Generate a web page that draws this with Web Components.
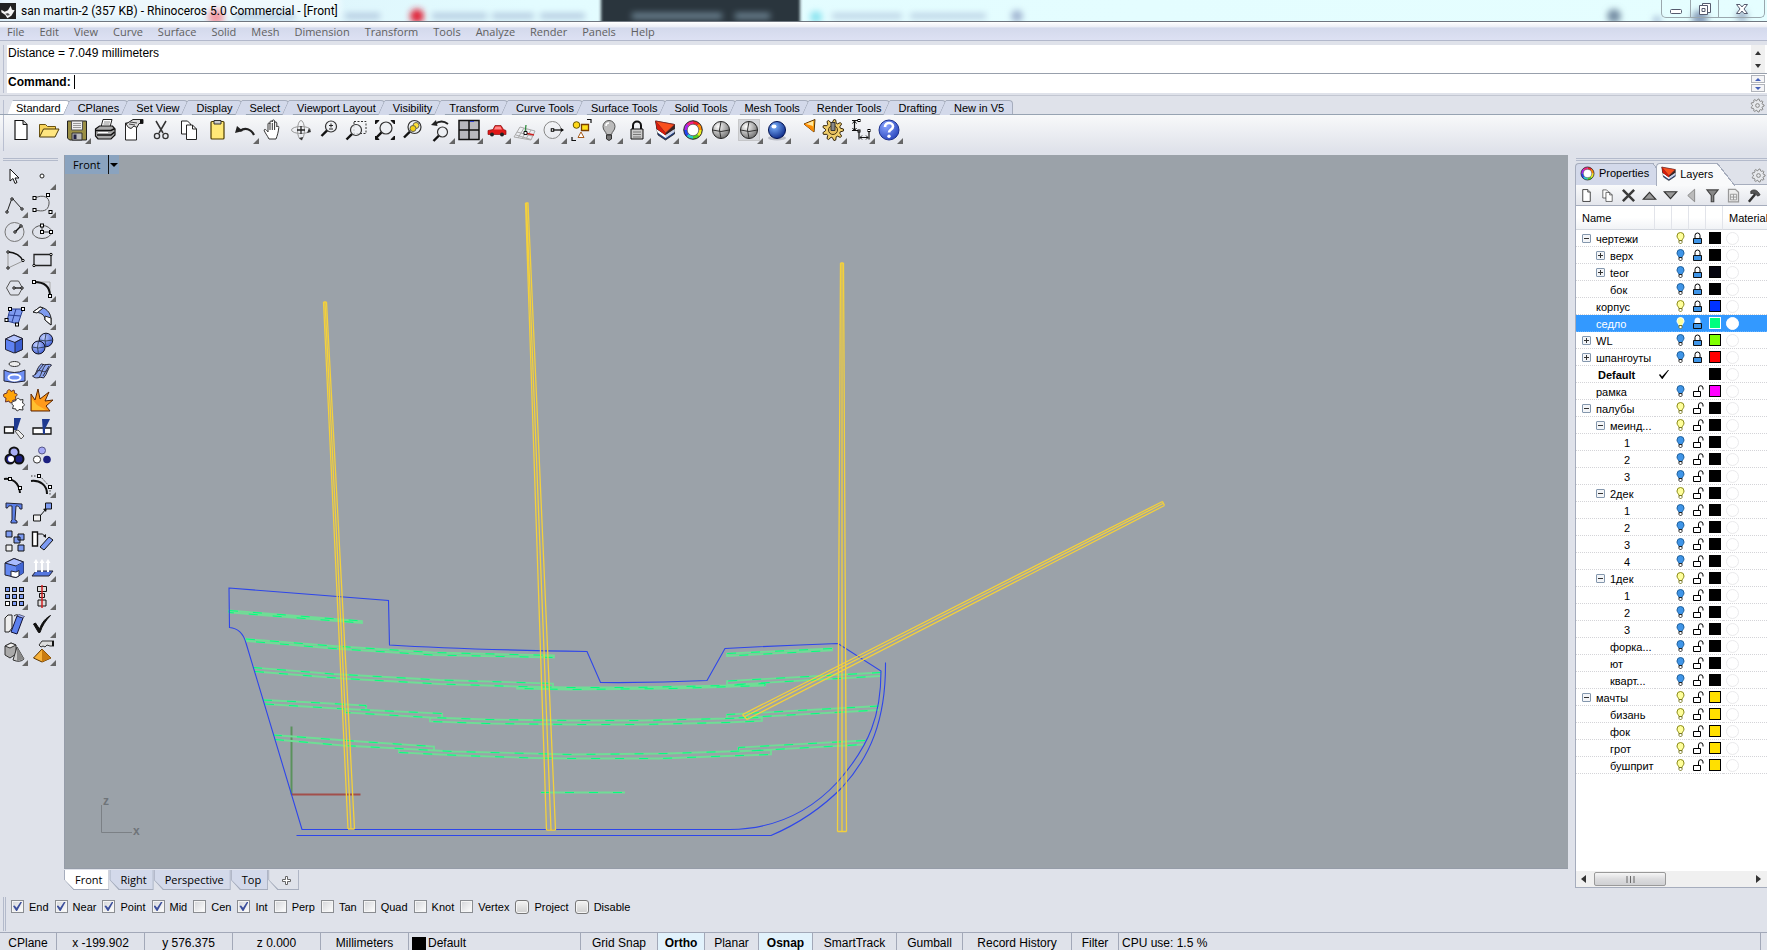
<!DOCTYPE html>
<html lang="en">
<head>
<meta charset="utf-8">
<title>san martin-2 (357 KB) - Rhinoceros 5.0 Commercial - [Front]</title>
<style>
html,body{margin:0;height:100%}
body{font:11px/14px "Liberation Sans",Arial,sans-serif;color:#000;background:#dfe2ea;overflow:hidden;
--face:#dfe2ea;--line:#a6adbd;--tab:#d3d9ea}
</style>
</head>
<body>
<rh-app></rh-app>
<script>
const SEGOE = '"Open Sans","Noto Sans",sans-serif';
const BASE = '*{box-sizing:border-box}button{font:inherit;color:inherit;background:none;border:0;padding:0;margin:0}svg{display:block}';

function define(name, css, html, ready) {
  const t = document.createElement('template');
  t.innerHTML = `<style>${BASE}${css}</style>${html}`;
  customElements.define(name, class extends HTMLElement {
    connectedCallback() {
      if (this.shadowRoot) return;
      const root = this.attachShadow({mode: 'open'});
      root.append(t.content.cloneNode(true));
      if (ready) ready.call(this, root);
    }
  });
}

/* ---------- icons, drawn on a 24 x 24 board ---------- */
const node = (x, y, s = 3) => `<rect x="${x - s / 2}" y="${y - s / 2}" width="${s}" height="${s}" fill="#fff" stroke="#000"/>`;
const dot = (x, y) => `<circle cx="${x}" cy="${y}" r="1.2" fill="#fff" stroke="#000"/>`;
const lens = (x, y, r) => `<path d="M${x - r * .7} ${y + r * .7}L${x - r - 4} ${y + r + 4}" stroke="#111" stroke-width="2.4"/><circle cx="${x}" cy="${y}" r="${r}" fill="#eef0f4" fill-opacity=".8" stroke="#333" stroke-width="1.2"/>`;
const grad = (id, a, b) => `<defs><radialGradient id="${id}" cx=".35" cy=".3" r=".8"><stop offset="0" stop-color="${a}"/><stop offset="1" stop-color="${b}"/></radialGradient></defs>`;
const wheel = (cx, cy, r, w) => ['#e22','#f80','#ee2','#5c2','#2cc','#24e','#a2e','#e28'].map((c, i) => {
  const a = i * Math.PI / 4 - Math.PI / 2, b = a + Math.PI / 4 + .04;
  return `<path d="M${cx + r * Math.cos(a)} ${cy + r * Math.sin(a)}A${r} ${r} 0 0 1 ${cx + r * Math.cos(b)} ${cy + r * Math.sin(b)}" stroke="${c}" stroke-width="${w}"/>`;
}).join('') + `<circle cx="${cx}" cy="${cy}" r="${r + w / 2}" stroke="#222"/><circle cx="${cx}" cy="${cy}" r="${r - w / 2}" fill="#fff" stroke="#444" stroke-width=".7"/>`;
const layersArt = '<path d="M2.500 3L5 17l7.500 5 9-6V6.500z" fill="#26407f" stroke="#222" stroke-width=".8"/><path d="M3.500 11l9 6 9-6v2.500l-9 6.500-8-5.500z" fill="#fff"/><path d="M12.500 17l9-6v3l-9 6z" fill="#c9d3ea"/><path d="M2.500 3l10 12 9-8.500v4.500l-9 6-9-6z" fill="#3a2420"/><path d="M2.500 3l19 3.500-9 8.500z" fill="#f9501e" stroke="#822" stroke-width=".7"/><path d="M2.500 3l10 12v2.500L4 11z" fill="#d81c0c"/>';
const gearPath = (cx, cy, R, r, n) => {
  let d = '';
  for (let i = 0; i < n * 4; i++) {
    const a = (i - .5) * Math.PI * 2 / (n * 4), q = (i % 4 < 2) ? R : r;
    d += (i ? 'L' : 'M') + (cx + q * Math.cos(a)).toFixed(1) + ' ' + (cy + q * Math.sin(a)).toFixed(1);
  }
  return d + 'z';
};
const sphere = (a, b, id) => grad(id, a, b) + `<circle cx="12" cy="12" r="8.500" fill="url(#${id})" stroke="#222"/><path d="M3.500 12q8.500 3 17 0M12 3.500q-3 8.500 0 17" stroke="#333"/>`;

const ICONS = {
  new: '<path d="M6 2.500h8l4 4v15H6z" fill="#fff" stroke="#111" stroke-width="1.200"/><path d="M14 2.500v4h4" fill="#ccc" stroke="#111"/>',
  open: '<path d="M2.500 19V6.500h6l2 2h8v3" fill="#f7d35a" stroke="#6b5310"/><path d="M2.500 19l4-8h15.500l-4 8z" fill="#ffe680" stroke="#4c3b08"/>',
  save: '<path d="M2.500 3h19v19h-17l-2-2z" fill="#9a8f45" stroke="#222"/><path d="M6.500 3h11v9h-11z" fill="#eee" stroke="#555"/><path d="M8 5.500h8M8 7.500h8M8 9.500h8" stroke="#999"/><path d="M7 15h10v7H7z" fill="#bbb" stroke="#333"/><path d="M8.500 16.500h3v4.500h-3z" fill="#224"/>',
  print: '<path d="M8 9l2-7.500h9L17 9z" fill="#fff" stroke="#222"/><path d="M11 4h6M10.500 6h6" stroke="#888"/><path d="M2.500 11l4-3h13l2.500 3v6l-4 4h-13l-2.500-3z" fill="#aaa" stroke="#111" stroke-width="1.200"/><path d="M2.500 12.500h15.500l4-2M4 17h14l3.500-3" stroke="#111" stroke-width="1.600"/><path d="M5 14.500h10" stroke="#fff"/>',
  props: '<path d="M4.500 5h11v17h-11z" fill="#fff" stroke="#222"/><path d="M5 6L12 1.500h10v4h-4l-2 4-3-1.500-3 2.500-2.500-1z" fill="#ddd" stroke="#222"/><path d="M8 6l6 1M9 4l7 1" stroke="#444"/><path d="M19 2h3v3h-3z" fill="#111"/>',
  cut: '<path d="M7 3l7 12M17 3l-7 12" stroke="#333" stroke-width="1.500"/><circle cx="8" cy="18" r="2.600" stroke="#333" stroke-width="1.300"/><circle cx="16.500" cy="18" r="2.600" stroke="#333" stroke-width="1.300"/>',
  copy: '<path d="M4.500 3h6l3 3v10h-9z" fill="#fff" stroke="#222"/><path d="M9.500 7h6l4 4v10.500h-10z" fill="#fff" stroke="#222"/><path d="M15.500 7v4h4" stroke="#222"/>',
  paste: '<rect x="6" y="3.500" width="13" height="17.500" rx="1" fill="#ffe877" stroke="#4b3b00" stroke-width="1.200"/><path d="M9 2.500h7v3.500H9z" fill="#ccc" stroke="#333"/>',
  undo: '<path d="M21 17c-3-6-9-8-14-4" stroke="#222" stroke-width="2.200"/><path d="M2 15l2-7 6 5z" fill="#222"/>',
  hand: '<path d="M8 21c-2-4-4-6-5-9 1-1.500 2.500 0 4 2V6c0-1.500 2-1.500 2 0v-2c0-1.500 2.300-1.500 2.300 0V3c0-1.500 2.300-1.300 2.300 0v2c0-1.500 2.200-1.300 2.200 0v4c.5-1.500 2.300-1 2 .5-.5 5-1.500 8-2.800 11.500z" fill="#fff" stroke="#333"/><path d="M9 6v6M11.300 5v7M13.600 5v7" stroke="#333"/>',
  rotate: '<ellipse cx="12" cy="12" rx="9.500" ry="3.500" stroke="#999"/><ellipse cx="12" cy="12" rx="3.500" ry="9.500" stroke="#999"/><path d="M12 8v8M8 12h8" stroke="#222" stroke-width="1.300"/><path d="M20 10l2 4-4 1zM10 20l3 2.500 1-3.500z" fill="#333"/>',
  zoom1: lens(14, 8.5, 5.5) + '<path d="M14 5.500v4M12 7.500h4M12 11h4" stroke="#222"/>',
  zoomwin: '<path d="M9 3.500h12v12H9z" stroke="#333" stroke-dasharray="2 1.500"/>' + lens(11, 12, 5.5),
  zoomext: '<path d="M2.500 6V2.500H6zM18 2.500h3.500V6zM2.500 18v3.500H6zM21.500 18v3.500H18z" fill="#111" stroke="#111"/>' + lens(13, 10, 6),
  zoomsel: lens(13.5, 9, 6.5) + '<circle cx="15" cy="7.500" r="3" fill="#ffe23a" stroke="#665"/><circle cx="12" cy="10.500" r="3" fill="#f4d010" stroke="#665"/>',
  zoomundo: lens(13.5, 14, 5) + '<path d="M19 6c-4-3-9-3-13 0" stroke="#222" stroke-width="2"/><path d="M2 7l5-5 1.500 6z" fill="#222"/>',
  fourview: '<path d="M2 2.500h20v19H2z" fill="#b8b8bd" stroke="#111" stroke-width="1.500"/><path d="M12 2.500v19M2 12h20" stroke="#111" stroke-width="1.500"/><path d="M13 3.500h4" stroke="#34c"/>',
  car: '<path d="M3 12.500l5-1 2-4h6l2.500 4 2.500 1v4H3z" fill="#e01818" stroke="#811" stroke-width=".7"/><path d="M10.500 8.500h5l1.500 3H9z" fill="#f88"/><circle cx="7" cy="16.500" r="2" fill="#222"/><circle cx="17" cy="16.500" r="2" fill="#222"/>',
  cplane: '<path d="M1 19L7 9l15 4-4 9zM4 14l15 4M9 21l5-10M3 17l15 4.500M13 21l5-9M5 20l6-10" stroke="#aaa"/><path d="M12 15l1-8" stroke="#2a8a3a" stroke-width="1.300"/><path d="M12 15l9 2" stroke="#c22" stroke-width="1.600"/><path d="M11 13.500h3v3h-3z" fill="#fff" stroke="#111"/>',
  circ: '<circle cx="11.500" cy="12" r="8.500" stroke="#888"/><path d="M11 12h11" stroke="#111" stroke-width="1.300"/><path d="M20 10l3 2-3 2z" fill="#111"/>' + node(11.5, 12, 2.5),
  select: '<path d="M3 19v3.500h4M18 1.500h4V5" stroke="#111" stroke-width="1.200"/><circle cx="7.500" cy="7" r="3.300" fill="#ffd91a" stroke="#665500"/><path d="M12.500 6.500h7v6h-7z" fill="#ffe11a" stroke="#7a3f00" stroke-width="1.300"/><path d="M9 19.500l3-5.500 3 5.500z" fill="#fff" stroke="#a65a1a"/>',
  bulb: '<path d="M12 2.500a6 6 0 0 1 6 6c0 4-3 5-3.500 8h-5C9 13.500 6 12.500 6 8.500a6 6 0 0 1 6-6z" fill="#bbb" stroke="#555"/><path d="M9 8c0-2 1-3 3-3" stroke="#fff" stroke-width="1.500"/><path d="M9.500 17h5v4l-2.500 1.500-2.500-1.500z" fill="#777" stroke="#333"/>',
  lock: '<path d="M8 11V7.500a4 4 0 0 1 8 0V11" stroke="#111" stroke-width="2"/><path d="M6 11h12v10H6z" fill="#ccc" stroke="#111"/><path d="M8 14h8M8 16.500h8M8 19h8" stroke="#777"/>',
  layers: layersArt,
  wheel: wheel(12, 12, 7.5, 3.5),
  sphere1: sphere('#fff', '#666', 's1'),
  sphere2: '<path d="M1.500 1.500h21v21h-21z" fill="#d4d6da" stroke="#aaa" stroke-dasharray="1 1"/>' + sphere('#fff', '#666', 's2'),
  render: grad('s3', '#7db4ff', '#05207f') + '<ellipse cx="12" cy="20" rx="9" ry="2.500" fill="#b9bcc5"/><circle cx="12" cy="12" r="8.500" fill="url(#s3)" stroke="#021250"/><ellipse cx="9" cy="8.500" rx="2.500" ry="2" fill="#fff"/>',
  spot: '<path d="M11 6L22 1.500 21 14z" fill="#ffb020" stroke="#5a3300"/><path d="M11 6l7-2 3 10z" fill="#ff8a00"/><path d="M13 6l7-3 0 5z" fill="#ffe9a0"/>',
  options: `<path d="${gearPath(12, 12, 10.5, 7.5, 9)}" fill="#f0ce6a" stroke="#33240a"/><circle cx="12" cy="12" r="4.500" fill="#e6bf60" stroke="#4a3510"/><path d="M10 4.500h4v8h-4z" fill="#888" stroke="#333"/>`,
  dims: '<path d="M3 2.500h8M3 12.500h8M5.500 3v9M10 12.500v9M20 12.500v9M11 19.500h8" stroke="#111" stroke-width="1.200"/><path d="M3.500 5.500l2-2.500 2 2.500M3.500 10l2 2.500 2-2.500M13 17.500l-2 2 2 2M17 17.500l2 2-2 2" stroke="#111"/>' + node(10, 2.5, 2) + node(20, 12.5, 2) + node(10, 13, 2),
  help: grad('s4', '#8aa5ff', '#2340b8') + '<circle cx="12" cy="12" r="10" fill="url(#s4)" stroke="#1d328f"/><path d="M8 9c0-5.500 8-5 8-.5 0 3-4 3-4 6" stroke="#fff" stroke-width="2.600"/><circle cx="12" cy="18.200" r="1.700" fill="#fff"/>',

  arrow: '<path d="M8 5v12l3-2.500 2 5 2-1-2-4.500h4z" fill="#fff" stroke="#111"/>',
  point: '<circle cx="12" cy="12" r="2" fill="#fff" stroke="#222"/>',
  polyline: '<path d="M5 20L10 6l10 11" stroke="#222"/>' + dot(5, 20) + dot(10, 7) + dot(20, 17),
  curve: '<path d="M5 6c8-4 15-1 14 6s-6 8-14 6" stroke="#555"/>' + node(4.500, 6) + node(18, 3) + node(4.500, 18) + node(20.500, 20),
  circle: '<circle cx="12.500" cy="12" r="9.500" stroke="#777"/><path d="M13 12l6-6" stroke="#111" stroke-width="1.400"/>' + dot(13, 12) + dot(19, 6),
  ellipse: '<ellipse cx="12" cy="12" rx="9.500" ry="6.500" stroke="#555"/><path d="M12 12V5.500M12 12h9" stroke="#333"/>' + node(12, 12) + node(12, 5.5) + node(21, 12),
  arc: '<path d="M6 20V4c7 0 13 4 15 9z" stroke="#999"/><path d="M6 4c7 0 13 4 15 9" stroke="#111" stroke-width="1.400"/>' + dot(6, 20) + dot(6, 4) + dot(21, 12.5),
  rect: '<path d="M4 6.500h17v11H4z" stroke="#222" stroke-width="1.300"/>' + dot(4, 17.5) + dot(21, 6.5),
  polygon: '<path d="M4.500 12l4-7h8l4 7-4 7h-8z" stroke="#555"/><path d="M12 12h8" stroke="#111" stroke-width="1.300"/>' + dot(12, 12) + dot(20, 12),
  fillet: '<path d="M4 6h16v14" stroke="#aaa"/><path d="M4 6c10 0 16 4 16 14" stroke="#111" stroke-width="2"/>' + node(4, 6) + node(20, 20),
  surface: '<path d="M8 5h13l-5 15-11-3z" fill="#7e9bf0" stroke="#2a3f90"/><path d="M14 5l-4 13M6 11l13 1" stroke="#2a3f90"/>' + node(8, 5) + node(21, 5) + node(4.500, 16) + node(15, 20.500),
  loft: '<path d="M3 8l7-5c6 1 10 5 11 11v7l-6-5c0-5-4-8-12-8z" fill="#7e9bf0" stroke="#222"/><path d="M3 8l7-5 3 1-6 5zM15 12l6 2v7l-6-5z" fill="#fff" stroke="#222"/>',
  box: '<path d="M3.500 7L12 3l8.500 3.500v11L12 21l-8.500-3.500z" fill="#5f82f2" stroke="#223"/><path d="M3.500 7L12 3l8.500 3.500L13 10.500z" fill="#b5c5ff" stroke="#223"/><path d="M13 10.500l7.500-4v11L13 21z" fill="#3c5fd0" stroke="#223"/>',
  boolean: grad('s5', '#c3d0ff', '#3656d0') + '<circle cx="16" cy="8" r="6.800" fill="url(#s5)" stroke="#112"/><circle cx="8.500" cy="15.500" r="6.500" fill="url(#s5)" stroke="#112"/><path d="M9.500 8q6 2 13 0M16 1.500q-2 6 0 13M2 15q6 2 13 0M8.500 9q-2 6 0 13" stroke="#234" stroke-width=".8"/>',
  tube: '<ellipse cx="12.500" cy="4" rx="5.500" ry="2.500" fill="#eee" stroke="#333"/><path d="M2 10q10 5 21 0v11q-11 3-21 0z" fill="#6f90f5" stroke="#223"/><ellipse cx="12.500" cy="17.500" rx="6" ry="3" fill="#6f90f5" stroke="#fff" stroke-width="2"/>',
  mesh: '<path d="M2.500 16c4 0 4-9 9-12 4 2 7-1 10 1-4 3-4 9-8 13-4-2-7 2-11-2z" fill="#8ea8f2" stroke="#223"/><path d="M7 11c4-2 6 3 11-1M9 18c3-5 3-9 7-14M5 15l8-10M13 16L19 6" stroke="#334"/>',
  puzzle: '<path d="M2 6l3-1c-.5-3.500 3.500-4.500 4-1.500l3-1.500.8 3.500c3-.5 3 2.500.6 3l.6 3-3.500 1c0 3-3.500 3-3.500.5L3.500 14l.5-4C1.500 10 1 7 2 6z" fill="#ffa40a" stroke="#633"/><path d="M11 13.500l3-1c0-2.500 3.500-3 4-.5l3-.5-.5 3.500c2.500.5 2.500 3 0 3.500l.5 3.500-4-.5c-.5 2-3.500 1.500-3-.5l-3.500-.5 1-3c-2-.5-2-3-.5-4z" fill="#fff" stroke="#333"/>',
  explode: '<path d="M1 23V6l4 6 3-11 2 10 9-7-4 9 8-1-7 6 4 5z" fill="#ff9a1a" stroke="#5a2500"/><path d="M2 22V11l5 6 9 5z" fill="#ffc030"/>',
  trim: '<path d="M2.500 11h9v6h-9z" fill="#fff" stroke="#111" stroke-width="1.300"/><path d="M12 2h7l-4 12h-3z" fill="#1e3a90"/><path d="M13 15l3-1 6 6-3 3z" fill="#eee" stroke="#555"/>',
  split: '<path d="M3 12h18v6H3z" fill="#fff" stroke="#111" stroke-width="1.300"/><path d="M12 3h8l-5 10v5h-2z" fill="#1e3a90"/>',
  join: '<circle cx="12" cy="8" r="4.500" fill="#a9aef5" stroke="#111" stroke-width="2"/><circle cx="17" cy="15" r="4.500" fill="#1b1f80" stroke="#111" stroke-width="2"/><circle cx="8" cy="15" r="4.500" fill="#22259a" stroke="#111" stroke-width="2"/><circle cx="12.500" cy="8.500" r="3" fill="#a9aef5"/><circle cx="9" cy="15" r="3" fill="#fff"/>',
  group: '<circle cx="12" cy="6.500" r="3.500" fill="#a5a9f5" stroke="#558"/><circle cx="7" cy="15.500" r="3.600" fill="#fff" stroke="#333"/><circle cx="17" cy="15.500" r="3.800" fill="#1b1f80"/>',
  cvedit: '<path d="M2 7c8-1 15 3 16 14" stroke="#111" stroke-width="2"/>' + node(8, 7) + node(18, 16),
  ptson: '<path d="M1 9c9-1 16 4 16 13" stroke="#111" stroke-width="2"/><path d="M1 4h9l10 11v8" stroke="#333" stroke-dasharray="1.500 1.500"/>' + node(9, 4) + node(20, 15),
  text: '<path d="M4 3l16 1v5h-2c-1-3-2-3-4-3l-1 14 2 1v2H9v-2l1-1L10 6C7 5.500 6 6 5.500 8H4z" fill="#5c80e8" stroke="#223"/>',
  move: '<path d="M10 16l6-7" stroke="#111"/><path d="M17 8l-4 1 3 3z" fill="#111"/><path d="M3.500 15h7v6h-7z" fill="#eee" stroke="#111"/><path d="M15.500 3h6v6h-6z" fill="#7d9bf2" stroke="#111"/>',
  copies: '<path d="M4 3h6v6H4zM16 6h6v6h-6zM12 9h6v6h-6zM16 17h6v6h-6z" fill="#7d9bf2" stroke="#111"/><path d="M4 17h6v6H4z" fill="#eee" stroke="#111"/>',
  orient: '<path d="M2.500 4h5v14h-5z" fill="#fff" stroke="#111" stroke-width="1.400"/><path d="M10 19L19 9l4 3-9 10z" fill="#7d9bf2" stroke="#111"/><path d="M8 6q5-1 7 2" stroke="#111"/><path d="M16 10l-3-2 3-2z" fill="#111"/>',
  cage: '<path d="M3 7l9-4.500L21.500 6v11L14 21.500 3 19z" fill="#6488f0" stroke="#223"/><path d="M3 7l9-4.500L21.500 6 14 10z" fill="#a9bcff" stroke="#223"/><path d="M14 10l7.500-4v11L14 21z" fill="#4266d4"/><path d="M9 15l5 1 3-1.500v5.500l-3 1.500-5-1z" fill="#fff" stroke="#223"/>',
  extrude: '<path d="M2 20l4-5h17l-4 5z" fill="#5577e0" stroke="#223"/><path d="M6 16V6M12 16V6M18 16V6" stroke="#fff" stroke-width="2"/><path d="M3.500 7L6 3l2.500 4zM9.500 7L12 3l2.500 4zM15.500 7L18 3l2.500 4z" fill="#fff"/>',
  array: [3, 10, 17].map(x => [3, 10, 17].map(y => `<rect x="${x + .5}" y="${y + .5}" width="4" height="4" fill="${x === 3 && y === 17 ? '#fff' : '#7d9bf2'}" stroke="#111"/>`).join('')).join(''),
  align: '<path d="M7.500 2.500h9v5h-9zM9.500 9.500h5v4h-5zM8 16h8v6H8z" fill="#ddd" stroke="#111"/><path d="M12 1v23" stroke="#d02020" stroke-width="1.500"/>',
  bend: '<path d="M3 6l3-3h4v13l-3 4H3z" fill="#eee" stroke="#222"/><path d="M12 4q4-3 5 1" stroke="#222"/><path d="M9 20l6-16 6 2-6 16z" fill="#5c80ee" stroke="#113"/><path d="M15 4l2-1.500 5.500 2L21 6z" fill="#b0c0ff" stroke="#113" stroke-width=".6"/>',
  check: '<path d="M3.500 12l2-1 4 6C12 10 16 6 20.500 3.500 16 8 12 14 10 20.500H8.500z" fill="#111" stroke="#111"/>',
  solids: '<path d="M3 6l6-3 5 2v9l-6 4-5-3z" fill="#aaa" stroke="#333"/><path d="M3 6l6-3 5 2-6 3z" fill="#eee" stroke="#333"/><path d="M15 7l7 12q-4 4-11 1z" fill="#ccc" stroke="#333"/><path d="M15 7l0 14 7-2z" fill="#888"/>',
  pyramid: '<path d="M3.500 18L12 9l9 9-9 4z" fill="#f7b23a" stroke="#5a3300"/><path d="M12 9v13l9-4z" fill="#c97c10"/><path d="M9 5l3-4h12v5h-4l-3-1-2 2-2-1-2 1z" fill="#ddd" stroke="#333"/><path d="M22 1h2v5h-2z" fill="#111"/>',
  gear: `<path d="${gearPath(12, 12, 10.5, 8, 9)}" fill="#e6e8ec" stroke="#888" stroke-width="1.600"/><circle cx="12" cy="12" r="3" stroke="#888" stroke-width="1.600"/>`,

  del: '<path d="M3 3l18 18M21 3L3 21" stroke="#3b3b3b" stroke-width="4"/>',
  up: '<path d="M2 18L12 7l10 11z" fill="#999" stroke="#333" stroke-width="1.800"/>',
  down: '<path d="M2 6l10 11L22 6z" fill="#999" stroke="#333" stroke-width="1.800"/>',
  left: '<path d="M17 2v20L6 12z" fill="#bbb" stroke="#888" stroke-width="1.500"/>',
  filter: '<path d="M3 3h18l-7 9v10h-4V12z" fill="#888" stroke="#444" stroke-width="1.800"/>',
  sheet: '<path d="M4 2h11l5 5v15H4z" fill="#eee" stroke="#999" stroke-width="2"/><path d="M7 10h10v9H7zM12 10v9M7 14.500h10" stroke="#999" stroke-width="1.500"/>',
  hammer: '<path d="M13 10L3 22" stroke="#333" stroke-width="4"/><path d="M6 5c5-4 11-2 15 6l-4 2c-3-4-6-5-11-4z" fill="#555" stroke="#222"/>',
  rhino: '<path d="M0 0h24v24H0z" fill="#222"/><path d="M2 10l5 3 5-2 4-7 2 6 4 1-5 8-6 4-3-5-6-4z" fill="#f4f4f4"/><path d="M8 16l4-1 3 3-4 1z" fill="#555"/>'
};
define('rh-icon', ':host{display:block;width:24px;height:24px;flex:none}svg{width:100%;height:100%}', '<svg viewBox="0 0 24 24" fill="none" aria-hidden="true"></svg>', function (root) {
  root.querySelector('svg').innerHTML = ICONS[this.getAttribute('name')] || '';
});
/* A tool button; the "more" attribute adds the fly-out corner. */
define('rh-tool', `:host{display:block;width:28px;height:28px}button{display:grid;place-items:center;width:28px;height:28px;position:relative}
:host([more]) button::after{content:"";position:absolute;right:0;bottom:0;border:3px solid;border-color:transparent #666 #666 transparent}`,
'<button type="button"></button>', function (root) {
  const n = this.getAttribute('name');
  root.querySelector('button').setAttribute('aria-label', n);
  root.querySelector('button').innerHTML = `<rh-icon name="${n}"></rh-icon>`;
});

/* ---------- title bar ---------- */
define('rh-titlebar', `:host{display:flex;height:22px;position:relative;overflow:hidden;background:linear-gradient(90deg,#d9ecf8,#e3fcff 30%,#e5feff);border-bottom:1px solid #6f7680;font:12px/20px Roboto,"Open Sans",sans-serif}
.back{position:absolute;inset:0;width:100%;height:21px}
.name{display:flex;gap:5px;position:relative;align-items:center}rh-icon{width:16px;height:16px}
.win{position:relative;margin-left:auto;margin-right:2px;display:flex;height:18px;border:1px solid #9aa7ad;border-top:0;border-radius:0 0 5px 5px}
button{width:28px;display:grid;place-items:center}button+button{border-left:1px solid #9aa7ad}button:last-child{width:46px}`,
`<svg class="back" preserveAspectRatio="xMinYMin slice" viewBox="0 0 1767 21"><defs><filter id="b" x="-20%" y="-200%" width="140%" height="500%"><feGaussianBlur stdDeviation="3"/></filter><filter id="c" x="-5%" y="-50%" width="110%" height="200%"><feGaussianBlur stdDeviation="1.500"/></filter></defs>
<path d="M0 -6h340v24H0z" fill="#fff" opacity=".5" filter="url(#b)"/>
<path d="M601-6h199v40H601z" fill="#2b353d" filter="url(#c)"/>
<g filter="url(#b)"><circle cx="216" cy="17" r="8" fill="#f29ba5"/><circle cx="417" cy="16" r="7" fill="#e02438"/><path d="M235 13h60v6h-60zM345 13h35v6h-35zM432 13h55v6h-55zM492 13h42v6h-42zM540 13h45v6h-45z" fill="#b4cbe0"/><path d="M632 13h90v6h-90zM735 13h35v6h-35z" fill="#6e8594"/><circle cx="816" cy="17" r="6" fill="#8be4f0"/><path d="M832 13h70v6h-70zM910 13h76v6h-76z" fill="#bdd4e6"/><circle cx="1017" cy="16" r="6" fill="#a2b6d2"/><circle cx="1614" cy="16" r="7" fill="#7890a6"/><circle cx="1657" cy="20" r="4" fill="#a9c0da"/><circle cx="1700" cy="18" r="8" fill="#8aa0bc"/><circle cx="1742" cy="16" r="6" fill="#a4b7cc"/></g></svg>
<div class="name"><rh-icon name="rhino"></rh-icon><span>san martin-2 (357 KB) - Rhinoceros 5.0 Commercial - [Front]</span></div>
<div class="win"><button type="button" aria-label="Minimize"><svg width="14" height="12" fill="#fff" stroke="#555b6e"><rect x="1.500" y="6.500" width="11" height="4" rx="1"/></svg></button><button type="button" aria-label="Restore"><svg width="14" height="14" fill="#fff" stroke="#555b6e"><path d="M4.500 1.500h8v9h-8z"/><path d="M1.500 3.500h8v9h-8z"/><path d="M4 6.500h3v3H4z"/></svg></button><button type="button" aria-label="Close"><svg width="14" height="12" fill="#fff" stroke="#555b6e"><path d="M1.500 1.500h3.500l2 2.500 2-2.500h3.500L9 6l3.500 4.500H9L7 8l-2 2.500H1.500L5 6z"/></svg></button></div>`);

/* ---------- menu bar ---------- */
define('rh-menubar', `:host{display:block;height:23px;border-bottom:4px solid var(--face)}
nav{display:flex;gap:15px;padding:0 7px;height:19px;background:linear-gradient(#fff,#eaecf5 30%,#d3d9ec 31%,#dde1f3);border-bottom:1px solid #b2b8cb;font:11px/19px ${SEGOE};color:#606060}a{color:inherit;text-decoration:none}`,
'<nav></nav>', function (root) {
  root.querySelector('nav').innerHTML = 'File Edit View Curve Surface Solid Mesh Dimension Transform Tools Analyze Render Panels Help'.split(' ').map(m => `<a href="#">${m}</a>`).join('');
});

/* ---------- command history and prompt ---------- */
define('rh-command', `:host{display:block;padding:0 0 2px 3px;border-bottom:1px solid #c3c7d2}
.in{border-left:1px solid #b9bfd0;padding-left:3px;display:block;font-size:12px}
.hist,.cmd{background:#fff;display:flex;justify-content:space-between}
.hist{height:28px;padding-left:1px;line-height:16px}
.cmd{border-top:1px solid #98a0ac;height:20px;padding-left:1px;line-height:16px}
label{font-weight:bold}.left{display:flex;align-items:center;flex:1;gap:3px;height:16px}i{width:1px;height:14px;background:#000}
input{border:0;outline:0;padding:0;flex:1;height:16px;font:inherit;background:none}
.sb,.spin{width:14px;margin-right:2px;display:flex;flex-direction:column;align-items:center}
.sb{background:#f0f0f0;justify-content:space-around}.spin{gap:1px;padding-top:1px}
.spin button{width:14px;height:8px;border:1px solid #b0b3ba;background:#f4f4f6;display:grid;place-items:center}`,
`<div class="in"><div class="hist"><span>Distance = 7.049 millimeters</span><div class="sb"><svg width="8" height="5"><path d="M1 5l3-4 3 4z" fill="#333"/></svg><svg width="8" height="5"><path d="M1 0l3 4 3-4z" fill="#333"/></svg></div></div>
<div class="cmd"><div class="left"><label for="c">Command:</label><i></i><input id="c" type="text"></div><div class="spin"><button type="button" aria-label="Up"><svg width="6" height="3"><path d="M0 3l3-3 3 3z" fill="#4560b8"/></svg></button><button type="button" aria-label="Down"><svg width="6" height="3"><path d="M0 0l3 3 3-3z" fill="#4560b8"/></svg></button></div></div></div>`);

/* ---------- toolbar tabs ---------- */
define('rh-tooltabs', `:host{display:flex;align-items:flex-end;height:19px;padding:0 2px 0 3px;border-bottom:1px solid #97a3b2}
.tabs{display:flex;padding-left:4px;height:14px;border-left:1px solid #b9bfd0}
button{position:relative;height:14px;line-height:15px;padding:0 8px;background:var(--tab);border:1px solid var(--line);border-width:1px 1px 0 0;border-radius:0 4px 0 0;white-space:nowrap;z-index:0}
button::before{content:"";position:absolute;z-index:-1;left:-4px;top:-1px;width:10px;height:14px;background:var(--tab);border:1px solid var(--line);border-width:1px 0 0 1px;border-radius:2px 0 0 0;transform:skewX(-24deg)}
button:first-child::before{left:0}button:first-child{clip-path:polygon(0 100%,5px 0,100% 0,100% 100%)}
button[aria-selected=true],button[aria-selected=true]::before{background:#fff}
rh-icon{width:15px;height:15px;margin:0 0 1px auto}`,
'<div class="tabs" role="tablist"></div><rh-icon name="gear"></rh-icon>', function (root) {
  root.querySelector('.tabs').innerHTML = ['Standard', 'CPlanes', 'Set View', 'Display', 'Select', 'Viewport Layout', 'Visibility', 'Transform', 'Curve Tools', 'Surface Tools', 'Solid Tools', 'Mesh Tools', 'Render Tools', 'Drafting', 'New in V5']
    .map((t, i) => `<button type="button" role="tab" aria-selected="${!i}">${t}</button>`).join('');
});
define('rh-toolbar', ':host{display:block;height:40px;padding-left:3px;background:linear-gradient(#f8f9fa,#dfe2ea 90%)}div{display:flex;padding:1px 3px 0;height:36px;border-left:1px solid #b9bfd0}', '<div></div>', function (root) {
  const plain = 'new open print props cut copy paste hand rotate zoom1 zoomwin zoomext zoomsel sphere1'.split(' ');
  root.querySelector('div').innerHTML = 'new open save print props cut copy paste undo hand rotate zoom1 zoomwin zoomext zoomsel zoomundo fourview car cplane circ select bulb lock layers wheel sphere1 sphere2 render spot options dims help'.split(' ')
    .map(n => `<rh-tool name="${n}"${plain.includes(n) ? '' : ' more'}></rh-tool>`).join('');
});

/* ---------- side tool palette ---------- */
define('rh-sidebar', `:host{display:block;width:64px;flex:none;padding-top:3px}
.grip{height:3px;border:solid #b3bacb;border-width:1px 0;margin:0 6px 1px 3px}.g{display:grid;grid-template-columns:28px 28px}`,
'<div class="grip"></div><div class="g"></div>', function (root) {
  const plain = 'arrow puzzle explode trim split group cvedit copies orient'.split(' ');
  root.querySelector('.g').innerHTML = 'arrow point polyline curve circle ellipse arc rect polygon fillet surface loft box boolean tube mesh puzzle explode trim split join group cvedit ptson text move copies orient cage extrude array align bend check solids pyramid'.split(' ')
    .map(n => `<rh-tool name="${n}"${plain.includes(n) ? '' : ' more'}></rh-tool>`).join('');
});

/* ---------- viewport with the ship drawing ---------- */
const green = [
  'M229 610.500L362 621v2L229 612.500z', 'M246 639L333 646 433 652.500 554 655.500v2L433 655 333 648.500 246 641z',
  'M253 667.500L333 674 440 680 553 683.500v4', 'M255 671.500L343 678.500 440 684 517 686.500 570 687.500 634 687.500 727 685.500 765 683.500v2L673 688.500 570 689.500 517 688.500v-2',
  'M881 672.500L727 681v4L881 676', 'M263 700L313 702.500 366 705.500v4', 'M265 704L345 709 442 713.500v4', 'M345 709v3.500L430 717.500 487 719.500 570 720.500 643 720.500 727 718.500 762 717.500v3.500L727 722.500 643 724.500 570 724.500 487 723.500 430 721.500v-4',
  'M879 706L727 714.500v4L879 710', 'M273 735L360 741.500 434 746.500v4', 'M275 739.500L343 745.500 399 748.500 453 751.500 570 754.500 667 753.500 727 751.500 771 750v4.500L727 756 660 758.500 570 758.500 533 758 460 755.500 399 752.500v-4',
  'M865 740.500L738.500 747.500v4L864 744.500', 'M832 648.500L727 653.500v2.500L832 650.500z', 'M541 792.500H625'
].join('');
const hull = 'M229 588L388.500 600.500 389.500 645Q460 649.500 587 651.500L600.500 682.500Q655 683 707 680.500L725 648.500Q780 645.500 838 643.500L881 671C881 715 870 745 838 781.500 810 812 775 829 730 829.500H302L246 643Q242 628.500 229.500 627.500z';
const keel = 'M885.500 662.500C886 720 870 757 842 787.500Q812 818 771 835.500H296.500';
const masts = 'M323.500 302L348 829M325 302L351 829M326.500 302L354.500 829M323.500 302h3M348 829h6.500M525.500 203L546.500 830M526.500 203L551 830M528 203L555.500 830M525.500 203h3M546.500 830h9M840.500 263L837.500 831.500M842 263V831.500M843.500 263L846.500 831.500M840.500 263h3M837.500 831.500h9M742.500 714.500L1162.500 501.500M744 717L1163 503.500M747 719.500L1164.500 505.500M742.500 714.500l4.500 5M1162.500 501.500l2 4';
define('rh-viewport', `:host{display:block;flex:1;min-height:0;position:relative;background:#9ba2a9;border:1px solid #959ca8;border-width:0 0 1px 1px;overflow:hidden}
svg.draw{width:100%;height:100%}.cap{position:absolute;left:0;top:0;display:flex;height:19px;background:#8aa3bf;font:11px/19px ${SEGOE};padding-left:8px}
button{width:11px;margin-left:8px;border-left:1px solid #111;display:grid;place-items:center}text{font:bold 12px "Liberation Sans",sans-serif;fill:#6f7479}`,
`<svg class="draw" viewBox="65 155 1503 713" fill="none" stroke-width="1"><g stroke-width="2"><path d="M291.500 726.500v68" stroke="#5a925c"/><path d="M291.500 794.500h69" stroke="#a24f4b"/></g>
<path d="${green}" stroke="#70dd96" stroke-width="1.800"/><path d="${green}" stroke="#00ff7f" stroke-dasharray="9 15"/>
<path d="${hull}${keel}" stroke="#2e46ea" stroke-width="1.100"/>
<path d="${masts}" stroke="#f3d03c" stroke-width="1.300"/>
<path d="M101.500 805v27.500H132" stroke="#7b8085"/><text x="103" y="805">z</text><text x="133" y="835">x</text></svg>
<div class="cap"><span>Front</span><button type="button" aria-label="Viewport menu"><svg width="8" height="4"><path d="M0 0h8L4 4z"/></svg></button></div>`);
define('rh-viewtabs', `:host{display:flex;height:24px;padding-top:1px;font:11px/20px ${SEGOE};flex:none}
button{position:relative;height:20px;padding:0 7px 0 11px;background:var(--tab);clip-path:polygon(0 0,100% 0,100% 100%,9px 100%,0 10px)}
button::before{content:"";position:absolute;inset:0;background:var(--line);clip-path:polygon(0 0,1px 0,1px 10px,10px 19px,calc(100% - 1px) 19px,calc(100% - 1px) 0,100% 0,100% 100%,9px 100%,0 10px)}
button[aria-selected=true]{background:#fff}button:last-child{background:var(--face);padding:0 8px 0 14px}`,
`<button type="button" role="tab" aria-selected="true">Front</button><button type="button" role="tab">Right</button><button type="button" role="tab">Perspective</button><button type="button" role="tab">Top</button><button type="button" aria-label="New viewport"><svg width="9" height="9" fill="#fff" stroke="#666"><path d="M3.500.5h2v3h3v2h-3v3h-2v-3h-3v-2h3z"/></svg></button>`);

/* ---------- layers panel ---------- */
const LAYERS = [
  ['чертежи', 0, '-', 1, 1, '#000'], ['верх', 1, '+', 0, 1, '#000'], ['teor', 1, '+', 0, 1, '#05050f'], ['бок', 1, '', 0, 1, '#000'],
  ['корпус', 0, '', 1, 1, '#0032ff'], ['седло', 0, '', 1, 1, '#00ff7f'], ['WL', 0, '+', 0, 1, '#7fff00'], ['шпангоуты', 0, '+', 0, 1, '#f00'],
  ['Default', 0, '', -1, -1, '#000'], ['рамка', 0, '', 0, 0, '#f0f'], ['палубы', 0, '-', 1, 0, '#000'], ['меинд...', 1, '-', 1, 0, '#000'],
  ['1', 2, '', 0, 0, '#000'], ['2', 2, '', 0, 0, '#000'], ['3', 2, '', 0, 0, '#000'], ['2дек', 1, '-', 1, 0, '#000'],
  ['1', 2, '', 0, 0, '#000'], ['2', 2, '', 0, 0, '#000'], ['3', 2, '', 0, 0, '#000'], ['4', 2, '', 0, 0, '#000'], ['1дек', 1, '-', 1, 0, '#000'],
  ['1', 2, '', 0, 0, '#000'], ['2', 2, '', 0, 0, '#000'], ['3', 2, '', 0, 0, '#000'], ['форка...', 1, '', 0, 0, '#000'], ['ют', 1, '', 0, 0, '#000'],
  ['кварт...', 1, '', 0, 0, '#000'], ['мачты', 0, '-', 1, 0, '#ffe000'], ['бизань', 1, '', 1, 0, '#ffe000'], ['фок', 1, '', 1, 0, '#ffe000'],
  ['грот', 1, '', 1, 0, '#ffe000'], ['бушприт', 1, '', 1, 0, '#ffe000']
];
const bulb = (on, sel) => `<svg width="11" height="14"><path d="M5.500 1.500a3.500 3.500 0 0 1 3.500 3.500c0 2-1.500 2.500-2 4.500h-3C3.500 7.500 2 7 2 5a3.500 3.500 0 0 1 3.500-3.500z" fill="${on ? '#ffff9c' : '#3f95e8'}" stroke="${sel ? '#fff' : on ? '#8a8a14' : '#1c5f9c'}"/><path d="M4 9.500h3v2l-1.500 1.500L4 11.500z" fill="#fff" stroke="${on ? '#777720' : '#222'}"/></svg>`;
const padlock = (shut, sel) => shut
  ? `<svg width="11" height="14" stroke="${sel ? '#fff' : '#000'}"><path d="M3 7V4.500a2.500 2.500 0 0 1 5 0V7" fill="#fff"/><path d="M1.500 7.500h8v5h-8z" fill="#3f95e8" stroke="#111"/></svg>`
  : '<svg width="12" height="14" fill="none" stroke="#000"><path d="M6.500 7V4a2.200 2.200 0 0 1 4.500 0v1.500"/><path d="M1.500 7.500h7v5h-7z" fill="#fff"/></svg>';
define('rh-panel', `:host{display:flex;flex-direction:column;width:192px;flex:none;margin:3px 0 5px 7px;min-height:0}
.grip{height:3px;flex:none;border:solid #b3bacb;border-width:1px 0;margin-left:1px}
.tabs{display:flex;height:24px;padding:2px 1px 0 0;flex:none;border-bottom:1px solid #a6adbd}
.tabs button{position:relative;height:22px;display:flex;gap:3px;align-items:center;padding:0 4px 3px 3px;border:1px solid #a6adbd;border-width:1px 0 0 1px;border-radius:4px 0 0 0;background:var(--tab);margin-right:10px}
.tabs button::after{content:"";position:absolute;left:100%;top:-1px;width:13px;height:22px;background:linear-gradient(to top right,var(--tab) 48%,#a6adbd 48%,#a6adbd 52%,transparent 52%)}
.tabs button+button{background:#f9fafb;margin-left:-7px;height:23px;z-index:1}.tabs button+button::after{width:18px;height:23px;background:linear-gradient(to top right,#f9fafb 48%,#a6adbd 48%,#a6adbd 52%,transparent 52%)}
.tabs rh-icon{width:17px;height:17px}.tabs>rh-icon{width:15px;height:15px;margin:5px 0 0 auto}
.box{flex:1;min-height:0;display:flex;flex-direction:column;background:#fff;border:1px solid #a6adbd;border-width:0 0 1px 1px}
.tools{display:flex;height:21px;flex:none;background:linear-gradient(#f9fafb,#e4e6ec);border-bottom:1px solid #a6adbd}
.tools button{width:21px;display:grid;place-items:center}.tools rh-icon{width:15px;height:15px}
table{width:100%;table-layout:fixed;border-spacing:0}th{height:24px;padding:0 0 0 6px;text-align:left;font-weight:normal;background:linear-gradient(#fff 50%,#f1f3f6);border-bottom:1px solid #d4d8df;border-right:1px solid #e2e4ea;white-space:nowrap}
th:last-child{border-right:0}td{height:17px;padding:0;border-bottom:1px dotted #d4d4d8;line-height:14px;white-space:nowrap}
td svg{margin:auto}.n{display:flex;align-items:center;gap:5px;height:16px;padding:1px 0 0 6px}.l1 .n{padding-left:20px}.l2 .n{padding-left:34px}
b{display:block;width:9px;height:9px;flex:none}b.x{border:1px solid #8497ad;border-radius:1px;background:linear-gradient(90deg,#333,#333) center/5px 1px no-repeat,#f3f5f8}
b.p{background:linear-gradient(#333,#333) center/5px 1px no-repeat,linear-gradient(#333,#333) center/1px 5px no-repeat,#f3f5f8}
.sw{width:12px;height:12px;border:1px solid #000;margin:auto}.m{width:13px;height:13px;border:1px solid #eaeaec;border-radius:50%;margin-left:3px}
.sel td{background:#3399ff;color:#fff;border-color:#66b3ff}.sel .m{background:#fff;border-color:#fff}.sel .sw{border-color:#fff}.cur .n{font-weight:bold;padding-left:8px}
.hs{margin-top:auto;height:16px;flex:none;display:flex;align-items:center;justify-content:space-between;background:#f0f0f0;padding:0 6px 0 5px}
.hs button{width:72px;height:14px;border:1px solid #999;border-radius:2px;background:linear-gradient(#f6f6f6,#dcdcde 50%,#cfd0d3);display:grid;place-items:center;margin:0 auto 0 8px}`,
`<div class="grip"></div><div class="tabs" role="tablist"><button type="button" role="tab"><rh-icon name="wheel"></rh-icon>Properties</button><button type="button" role="tab" aria-selected="true"><rh-icon name="layers"></rh-icon>Layers</button><rh-icon name="gear"></rh-icon></div>
<div class="box"><div class="tools"></div><table><colgroup><col style="width:79px"><col style="width:17px"><col style="width:17px"><col style="width:17px"><col style="width:17px"><col></colgroup><thead><tr><th>Name</th><th></th><th></th><th></th><th></th><th>Material</th></tr></thead><tbody></tbody></table>
<div class="hs"><svg width="5" height="8"><path d="M5 0v8L0 4z" fill="#333"/></svg><button type="button" aria-label="Scroll"><svg width="9" height="7"><path d="M1 0v7M4.500 0v7M8 0v7" stroke="#666"/></svg></button><svg width="5" height="8"><path d="M0 0v8l5-4z" fill="#333"/></svg></div></div>`, function (root) {
  root.querySelector('.tools').innerHTML = 'new copy del up down left filter sheet hammer'.split(' ').map(n => `<button type="button" aria-label="${n}"><rh-icon name="${n}"></rh-icon></button>`).join('');
  root.querySelector('tbody').innerHTML = LAYERS.map(([name, lvl, exp, on, shut, col]) => {
    const sel = name === 'седло', cur = name === 'Default';
    return `<tr class="l${lvl}${sel ? ' sel' : ''}${cur ? ' cur' : ''}"><td><div class="n"><b class="${exp ? 'x' : ''}${exp === '+' ? ' p' : ''}"></b>${name}</div></td>
<td>${cur ? '<svg width="10" height="9"><path d="M0 5l1-1 2 2.500L9 0h1L3.500 9H3z"/></svg>' : ''}</td><td>${on < 0 ? '' : bulb(on, sel)}</td><td>${shut < 0 ? '' : padlock(shut, sel)}</td><td><div class="sw" style="background:${col}"></div></td><td><div class="m"></div></td></tr>`;
  }).join('');
});

/* ---------- object snaps ---------- */
define('rh-osnap', `:host{display:block;height:39px;padding:4px 3px;flex:none}div{border:solid #b3bacb;border-width:0 1px;width:3px;height:34px;flex:none}
form{display:flex;gap:6px}label{display:flex;gap:5px;height:19px;align-items:center}label:first-of-type{margin-left:-1px}
input{appearance:none;width:13px;height:13px;margin:0;border:1px solid #8a8d92;background:linear-gradient(135deg,#d3d5d9,#fff);box-shadow:inset 0 0 0 1px #f5f5f5;display:grid;place-items:center}
input:checked::after{content:"";width:9px;height:9px;background:#3c4f9c;clip-path:polygon(0 45%,18% 38%,40% 65%,82% 0,100% 0,45% 100%,35% 100%)}
.r{width:14px;height:14px;border-radius:3px;border-color:#777;background:linear-gradient(#f4f4f4,#cfcfcf)}`,
'<form><div></div></form>', function (root) {
  const on = ['End', 'Near', 'Point', 'Mid', 'Int'];
  root.querySelector('form').insertAdjacentHTML('beforeend', 'End Near Point Mid Cen Int Perp Tan Quad Knot Vertex Project Disable'.split(' ')
    .map((n, i) => `<label><input type="checkbox"${on.includes(n) ? ' checked' : ''}${i > 10 ? ' class="r"' : ''}>${n}</label>`).join(''));
});

/* ---------- status bar ---------- */
define('rh-status', `:host{display:flex;height:18px;flex:none;border-top:1px solid #a2a8b8;font-size:12px;line-height:20px;overflow:hidden}
span,button{display:block;height:22px;text-align:center;border-right:1px solid #a2a8b8;white-space:nowrap;flex:none;width:88px}
button{height:20px}
.on{background:#e2f2fc;font-weight:bold}.lay{display:flex;gap:2px;width:172px;padding:2px 0 0 3px;line-height:16px}.lay i{width:14px;height:14px;margin-top:2px;background:#000}
.s{width:47px}.m{width:54px}.c{width:57px}.g{width:77px}.t{width:84px}.b{width:66px}.h{width:109px}.f{flex:1;text-align:left;padding-left:3px;margin-right:6px}`,
`<span class="c">CPlane</span><span>x -199.902</span><span>y 576.375</span><span>z 0.000</span><span>Millimeters</span><button type="button" class="lay"><i></i>Default</button>
<button type="button" class="g">Grid Snap</button><button type="button" class="s on">Ortho</button><button type="button" class="m">Planar</button><button type="button" class="m on">Osnap</button><button type="button" class="t">SmartTrack</button><button type="button" class="b">Gumball</button><button type="button" class="h">Record History</button><button type="button" class="s">Filter</button><span class="f">CPU use: 1.5 %</span>`);

define('rh-app', `:host{display:flex;flex-direction:column;height:100vh}.main{display:flex;flex:1;min-height:0}.view{display:flex;flex-direction:column;flex:1;min-width:0}`,
`<rh-titlebar></rh-titlebar><rh-menubar></rh-menubar><rh-command></rh-command><rh-tooltabs></rh-tooltabs><rh-toolbar></rh-toolbar>
<div class="main"><rh-sidebar></rh-sidebar><div class="view"><rh-viewport></rh-viewport><rh-viewtabs></rh-viewtabs></div><rh-panel></rh-panel></div>
<rh-osnap></rh-osnap><rh-status></rh-status>`);
</script>
</body>
</html>
